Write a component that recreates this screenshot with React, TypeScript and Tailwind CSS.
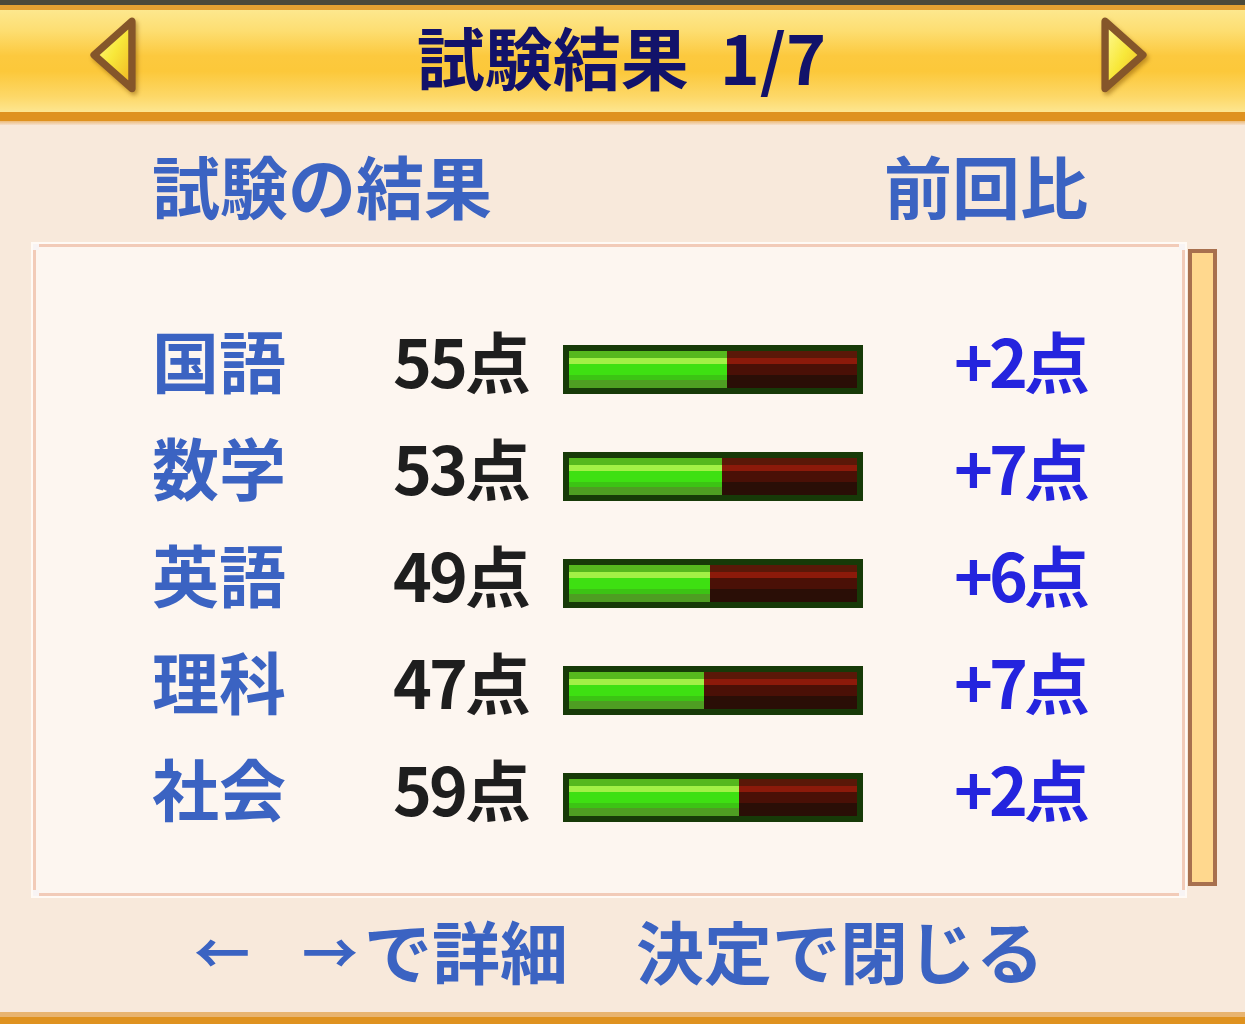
import React from "react";

const rows = [
  { name: "国語", score: 55, diff: "+2点" },
  { name: "数学", score: 53, diff: "+7点" },
  { name: "英語", score: 49, diff: "+6点" },
  { name: "理科", score: 47, diff: "+7点" },
  { name: "社会", score: 59, diff: "+2点" },
];

function Arrow({ dir }: { dir: "left" | "right" }) {
  const pts = dir === "left" ? "6,38 42,6 42,70" : "42,38 6,6 6,70";
  const id = dir === "left" ? "gl" : "gr";
  return (
    <svg width="52" height="82" viewBox="0 0 48 78" className="-mt-[10px] drop-shadow-[2px_3px_2px_rgba(120,70,0,0.45)]">
      <defs>
        <linearGradient id={id} x1="0" y1="0" x2="1" y2="1">
          <stop offset="0" stopColor="#fffca0" />
          <stop offset="0.5" stopColor="#f8e83a" />
          <stop offset="1" stopColor="#f0b020" />
        </linearGradient>
      </defs>
      <polygon points={pts} fill={`url(#${id})`} stroke="#85562a" strokeWidth="7" strokeLinejoin="round" />
    </svg>
  );
}

function Bar({ value }: { value: number }) {
  return (
    <div className="w-[300px] h-[49px] bg-[#173a08] p-[6px] mt-[22px]">
      <div className="relative w-full h-full bg-[linear-gradient(to_bottom,#5a1808_0%,#5a1808_18%,#8c1a0a_18%,#8c1a0a_34%,#4a1006_34%,#4a1006_66%,#2a0e06_66%,#2a0e06_100%)]">
        <div
          className="h-full bg-[linear-gradient(to_bottom,#56b81e_0%,#56b81e_18%,#a2f046_18%,#a2f046_34%,#3ee012_34%,#3ee012_66%,#3cc414_66%,#3cc414_78%,#4e9e22_78%,#4e9e22_100%)]"
          style={{ width: `${value}%` }}
        />
      </div>
    </div>
  );
}

export default function App() {
  const font = "font-['Noto_Sans_CJK_JP',sans-serif] font-bold";
  return (
    <div className={`w-[1245px] h-[1024px] bg-[#f8e9db] flex flex-col overflow-hidden ${font}`}>
      {/* top header */}
      <div className="h-[5px] bg-[#4b4a3a]" />
      <div className="h-[5px] bg-[#e3a132]" />
      <div className="h-[102px] bg-[linear-gradient(to_bottom,#fde88e_0%,#fdde72_20%,#fcc93e_45%,#fcc83a_60%,#fdd868_85%,#fde690_100%)] flex items-center justify-between pl-[87px] pr-[95px]">
        <Arrow dir="left" />
        <div className="text-[68px] leading-none text-[#12126a] whitespace-pre -mt-[10px] ml-[6px]">試験結果  1/7</div>
        <Arrow dir="right" />
      </div>
      <div className="h-[9px] bg-[#df921f]" />
      <div className="h-[4px] bg-[linear-gradient(to_bottom,#ecbb7a,#f6e0cc)]" />

      {/* section header */}
      <div className="h-[119px] flex items-center justify-between pl-[152px] pr-[157px] text-[#3b63c2] text-[68px] leading-none">
        <span>試験の結果</span>
        <span>前回比</span>
      </div>

      {/* panel */}
      <div className="flex items-start ml-[33px] gap-[3px]">
        <div className="relative w-[1152px] h-[652px] bg-[#fdf6f0] border-[3px] border-[#f2cbb8] shadow-[0_0_0_2px_#fffaf5]">
          <div className="absolute -left-[3px] -top-[3px] w-[6px] h-[6px] bg-[#f8f4f4]" />
          <div className="absolute -right-[3px] -top-[3px] w-[6px] h-[6px] bg-[#f8f4f4]" />
          <div className="absolute -left-[3px] -bottom-[3px] w-[6px] h-[6px] bg-[#f8f4f4]" />
          <div className="absolute -right-[3px] -bottom-[3px] w-[6px] h-[6px] bg-[#f8f4f4]" />
          <div className="flex flex-col pt-[58px]">
            {rows.map((r) => (
              <div key={r.name} className="h-[107px] flex items-center pl-[116px] pr-[94px]">
                <div className="w-[241px] text-[67px] leading-none text-[#3b63c2]">{r.name}</div>
                <div className="w-[170px] text-[66px] leading-none text-[#1e1e1e] tracking-[-3px]">
                  {r.score}点
                </div>
                <Bar value={r.score} />
                <div className="flex-1 text-right text-[66px] leading-none text-[#2424de] tracking-[-4px] pr-[2px]">{r.diff}</div>
              </div>
            ))}
          </div>
        </div>
        <div className="mt-[5px] w-[29px] h-[637px] bg-[#ffd88e] border-[4px] border-[#a8704e]" />
      </div>

      {/* footer */}
      <div className="flex-1 flex items-center text-[#3b63c2] leading-none -mt-[8px]">
        <div className="flex items-center ml-[194px]">
          <span className="w-[108px] text-[56px]">←</span>
          <span className="w-[62px] text-[56px]">→</span>
          <span className="text-[68px] whitespace-pre">で詳細　決定で閉じる</span>
        </div>
      </div>
      <div className="h-[5px] bg-[#e8b470]" />
      <div className="h-[7px] bg-[#df921f]" />
    </div>
  );
}
